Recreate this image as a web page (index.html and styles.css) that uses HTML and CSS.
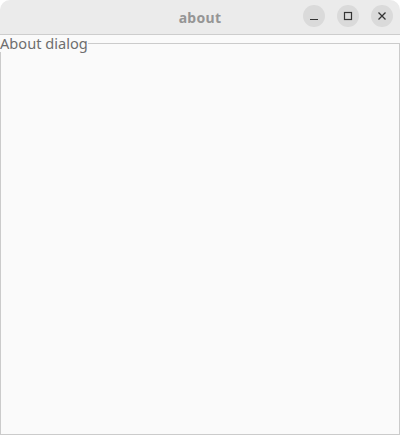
FILE: index.html
```html
<!DOCTYPE html>
<html>
<head>
<meta charset="utf-8">
<link rel="stylesheet" href="styles.css">
</head>
<body>
<div class="window">
  <div class="titlebar">
    <div class="title">about</div>
    <div class="controls">
      <div class="btn">
        <svg width="10" height="10" viewBox="0 0 10 10"><path d="M1 8.5H9" stroke="#333" stroke-width="1.2"/></svg>
      </div>
      <div class="btn">
        <svg width="10" height="10" viewBox="0 0 10 10"><rect x="1.5" y="1.5" width="7" height="7" fill="none" stroke="#333" stroke-width="1.2"/></svg>
      </div>
      <div class="btn">
        <svg width="10" height="10" viewBox="0 0 10 10"><path d="M1.5 1.5L8.5 8.5M8.5 1.5L1.5 8.5" stroke="#333" stroke-width="1.3"/></svg>
      </div>
    </div>
  </div>
  <div class="content">
    <fieldset class="group">
      <legend class="group-label">About dialog</legend>
    </fieldset>
  </div>
</div>
</body>
</html>
```
FILE: styles.css
```css
html, body {
  margin: 0;
  padding: 0;
  background: #ffffff;
}
.window {
  width: 400px;
  height: 435px;
  display: flex;
  flex-direction: column;
  background: #fafafa;
  border-radius: 10px 10px 0 0;
  overflow: hidden;
  font-family: "Noto Sans", "DejaVu Sans", sans-serif;
}
.titlebar {
  height: 34px;
  flex: none;
  background: #ebebeb;
  border-bottom: 1px solid #cdcdcd;
  position: relative;
  display: flex;
  align-items: center;
  justify-content: center;
}
.title {
  font-size: 14px;
  font-weight: bold;
  color: #959595;
  letter-spacing: 0.3px;
}
.controls {
  position: absolute;
  right: 7px;
  top: 5px;
  display: flex;
  gap: 12px;
}
.btn {
  width: 22px;
  height: 22px;
  border-radius: 50%;
  background: #dadada;
  display: flex;
  align-items: center;
  justify-content: center;
}
.content {
  flex: 1;
  display: flex;
}
.group {
  flex: 1;
  margin: 0;
  padding: 0;
  border: 1px solid #cbcbcb;
  min-width: 0;
}
.group-label {
  padding: 0;
  margin-left: -1px;
  font-size: 14.6px;
  line-height: 17px;
  color: #6e6e6e;
}
```
